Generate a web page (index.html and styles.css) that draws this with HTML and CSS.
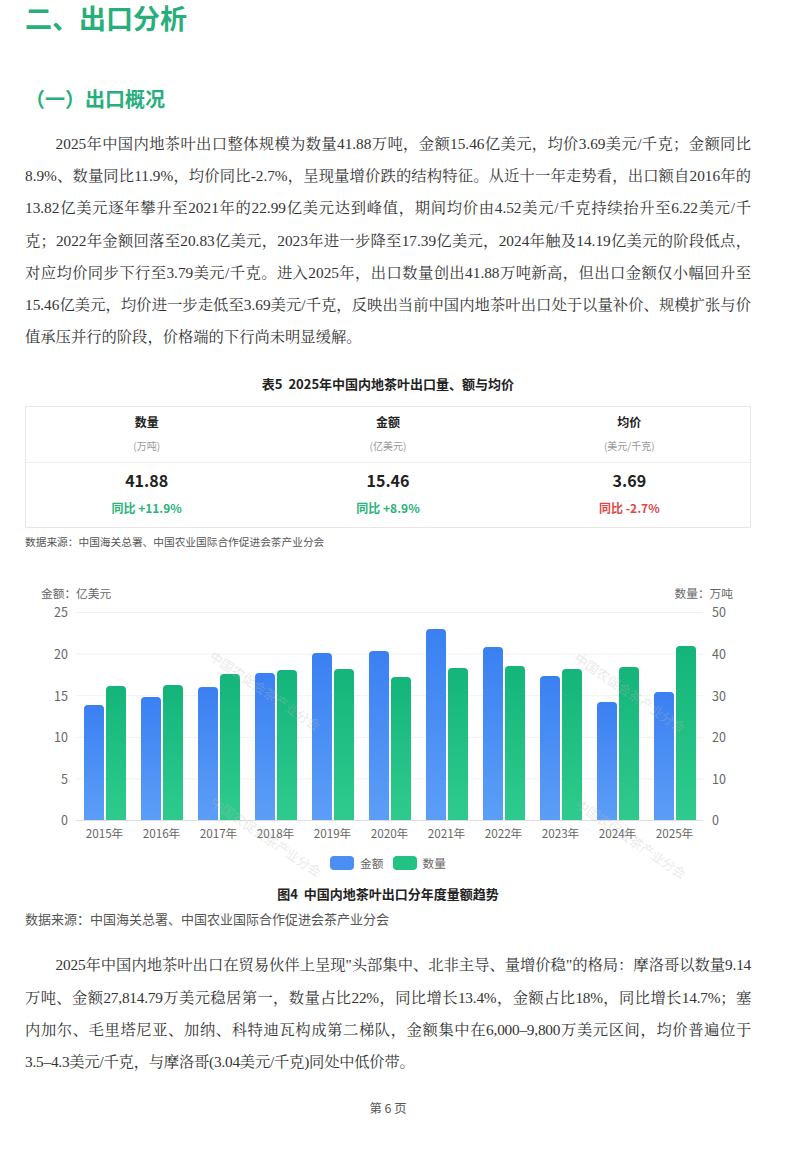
FILE: index.html
```html
<!DOCTYPE html>
<html lang="zh-CN">
<head>
<meta charset="utf-8">
<title>二、出口分析</title>
<link rel="stylesheet" href="styles.css">
</head>
<body>
<div class="page">
  <h1 class="h1">二、出口分析</h1>
  <h2 class="h2">（一）出口概况</h2>
  <p class="para">2025年中国内地茶叶出口整体规模为数量41.88万吨，金额15.46亿美元，均价3.69美元/千克；金额同比8.9%、数量同比11.9%，均价同比-2.7%，呈现量增价跌的结构特征。从近十一年走势看，出口额自2016年的13.82亿美元逐年攀升至2021年的22.99亿美元达到峰值，期间均价由4.52美元/千克持续抬升至6.22美元/千克；2022年金额回落至20.83亿美元，2023年进一步降至17.39亿美元，2024年触及14.19亿美元的阶段低点，对应均价同步下行至3.79美元/千克。进入2025年，出口数量创出41.88万吨新高，但出口金额仅小幅回升至15.46亿美元，均价进一步走低至3.69美元/千克，反映出当前中国内地茶叶出口处于以量补价、规模扩张与价值承压并行的阶段，价格端的下行尚未明显缓解。</p>

  <div class="caption table-caption">表5&nbsp; 2025年中国内地茶叶出口量、额与均价</div>
  <div class="stats">
    <div class="stat-row head">
      <div class="cell"><div class="cell-title">数量</div><div class="cell-unit">(万吨)</div></div>
      <div class="cell"><div class="cell-title">金额</div><div class="cell-unit">(亿美元)</div></div>
      <div class="cell"><div class="cell-title">均价</div><div class="cell-unit">(美元/千克)</div></div>
    </div>
    <div class="stat-row body">
      <div class="cell"><div class="cell-value">41.88</div><div class="cell-yoy up">同比 +11.9%</div></div>
      <div class="cell"><div class="cell-value">15.46</div><div class="cell-yoy up">同比 +8.9%</div></div>
      <div class="cell"><div class="cell-value">3.69</div><div class="cell-yoy down">同比 -2.7%</div></div>
    </div>
  </div>
  <div class="source small">数据来源：中国海关总署、中国农业国际合作促进会茶产业分会</div>

  <div class="chart">
    <div class="axis-titles"><span>金额：亿美元</span><span>数量：万吨</span></div>
    <div class="chart-body">
      <div class="ticks left"><span>25</span><span>20</span><span>15</span><span>10</span><span>5</span><span>0</span></div>
      <div class="plot">
        <div class="group"><div class="bar blue" style="height:55.28%"></div><div class="bar green" style="height:64.4%"></div></div>
        <div class="group"><div class="bar blue" style="height:59.3%"></div><div class="bar green" style="height:65.2%"></div></div>
        <div class="group"><div class="bar blue" style="height:64.1%"></div><div class="bar green" style="height:70.4%"></div></div>
        <div class="group"><div class="bar blue" style="height:70.9%"></div><div class="bar green" style="height:72.4%"></div></div>
        <div class="group"><div class="bar blue" style="height:80.6%"></div><div class="bar green" style="height:72.6%"></div></div>
        <div class="group"><div class="bar blue" style="height:81.4%"></div><div class="bar green" style="height:69.2%"></div></div>
        <div class="group"><div class="bar blue" style="height:91.96%"></div><div class="bar green" style="height:73.2%"></div></div>
        <div class="group"><div class="bar blue" style="height:83.32%"></div><div class="bar green" style="height:74.4%"></div></div>
        <div class="group"><div class="bar blue" style="height:69.56%"></div><div class="bar green" style="height:72.8%"></div></div>
        <div class="group"><div class="bar blue" style="height:56.76%"></div><div class="bar green" style="height:74%"></div></div>
        <div class="group"><div class="bar blue" style="height:61.84%"></div><div class="bar green" style="height:83.76%"></div></div>
      </div>
      <div class="ticks right"><span>50</span><span>40</span><span>30</span><span>20</span><span>10</span><span>0</span></div>
      <div class="xlabels">
        <span>2015年</span><span>2016年</span><span>2017年</span><span>2018年</span><span>2019年</span><span>2020年</span><span>2021年</span><span>2022年</span><span>2023年</span><span>2024年</span><span>2025年</span>
      </div>
    </div>
    <div class="legend">
      <span class="legend-item"><span class="swatch blue"></span>金额</span>
      <span class="legend-item"><span class="swatch green"></span>数量</span>
    </div>
    <span class="watermark wm1">中国农促会茶产业分会</span>
    <span class="watermark wm2">中国农促会茶产业分会</span>
    <span class="watermark wm3">中国农促会茶产业分会</span>
    <span class="watermark wm4">中国农促会茶产业分会</span>
  </div>
  <div class="caption fig-caption">图4&nbsp; 中国内地茶叶出口分年度量额趋势</div>
  <div class="source large">数据来源：中国海关总署、中国农业国际合作促进会茶产业分会</div>

  <p class="para para2">2025年中国内地茶叶出口在贸易伙伴上呈现"头部集中、北非主导、量增价稳"的格局：摩洛哥以数量9.14万吨、金额27,814.79万美元稳居第一，数量占比22%，同比增长13.4%，金额占比18%，同比增长14.7%；塞<span class="nobr">内加尔</span>、毛里塔尼亚、加纳、科特迪瓦构成第二梯队，金额集中在<span class="nobr">6,000–9,800万美元</span>区间，均价普遍位于<span class="nobr">3.5–4.3美元/千克</span>，与摩洛哥(3.04美元/千克)同处中低价带。</p>

  <div class="footer">第 6 页</div>
</div>
</body>
</html>
```

FILE: styles.css
```css
* { box-sizing: border-box; }
html, body { margin: 0; padding: 0; background: #fff; }
body {
  font-family: "Noto Sans CJK SC", "Noto Sans", sans-serif;
  color: #333;
}
.page {
  width: 751px;
  padding-left: 25px;
}
.h1 {
  margin: 0;
  font-size: 27px;
  line-height: 36px;
  font-weight: 700;
  color: #27ae7a;
}
.h2 {
  margin: 49px 0 0;
  font-size: 20px;
  line-height: 28px;
  font-weight: 700;
  color: #27ae7a;
}
.para {
  margin: 15px 0 0;
  font-family: "Liberation Serif", "Noto Serif CJK SC", "Noto Sans CJK SC", serif;
  font-size: 15.3px;
  line-height: 32.2px;
  text-indent: 2em;
  text-align: justify;
  color: #333;
}
.para2 {
  margin-top: 21px;
  letter-spacing: -0.22px;
}
.nobr { white-space: nowrap; }
.caption {
  text-align: center;
  font-size: 13px;
  line-height: 18px;
  font-weight: 700;
  color: #222;
}
.table-caption { margin-top: 22px; }
.stats {
  margin-top: 13px;
  border: 1px solid #e6e6e6;
}
.stat-row {
  display: grid;
  grid-template-columns: 1fr 1fr 1fr;
}
.stat-row.head { border-bottom: 1px solid #eeeeee; }
.cell { text-align: center; }
.head .cell { padding: 6px 0 9px; }
.body .cell { padding: 6px 0 11px; }
.cell-title {
  font-size: 12px;
  line-height: 18px;
  font-weight: 700;
  color: #222;
}
.cell-unit {
  margin-top: 8px;
  font-size: 10px;
  line-height: 14px;
  color: #999;
}
.cell-value {
  font-size: 16px;
  line-height: 22px;
  font-weight: 700;
  color: #222;
}
.cell-yoy {
  margin-top: 9px;
  font-size: 12px;
  line-height: 16px;
  font-weight: 700;
}
.cell-yoy.up { color: #2ab37b; }
.cell-yoy.down { color: #e04848; }
.source { color: #555; }
.source.small {
  margin-top: 6px;
  font-size: 10.7px;
  line-height: 16px;
}
.source.large {
  margin-top: 7px;
  font-size: 13px;
  line-height: 18px;
}
.chart {
  position: relative;
  margin-top: 35px;
  color: #666;
}
.axis-titles {
  display: flex;
  justify-content: space-between;
  padding: 0 18px 0 16px;
  font-size: 11.7px;
  line-height: 16px;
  color: #666;
}
.chart-body {
  margin-top: 11px;
  display: grid;
  grid-template-columns: 51px 627px 1fr;
  grid-template-rows: 209px auto;
}
.ticks {
  display: flex;
  flex-direction: column;
  justify-content: space-between;
  margin: -8px 0 -7px;
  font-size: 12.5px;
  line-height: 16px;
  color: #666;
}
.ticks.left { text-align: right; padding-right: 8px; }
.ticks.right { text-align: left; padding-left: 9px; }
.plot {
  display: flex;
  align-items: flex-end;
  border-bottom: 1px solid #dedede;
  background-image: linear-gradient(to bottom, #f1f1f1 1px, transparent 1px);
  background-size: 100% 20%;
}
.group {
  flex: 1;
  height: 100%;
  display: flex;
  justify-content: center;
  align-items: flex-end;
  gap: 2px;
}
.bar {
  width: 20px;
  border-radius: 4px 4px 0 0;
}
.bar.blue { background: linear-gradient(to bottom, #3a80f2, #5c9ef6); }
.bar.green { background: linear-gradient(to bottom, #14b47a, #2fcb8e); }
.xlabels {
  grid-column: 2;
  display: flex;
  margin-top: 4px;
  font-size: 11.7px;
  line-height: 16px;
  color: #666;
}
.xlabels span { flex: 1; text-align: center; }
.watermark {
  position: absolute;
  width: 130px;
  font-size: 13px;
  line-height: 14px;
  color: rgba(185, 185, 185, 0.32);
  white-space: nowrap;
  transform: rotate(34deg);
  transform-origin: center;
  pointer-events: none;
}
.wm1 { left: 175px; top: 99px; }
.wm2 { left: 176px; top: 245px; }
.wm3 { left: 540px; top: 101px; }
.wm4 { left: 541px; top: 247px; }
.legend {
  margin-top: 14px;
  display: flex;
  justify-content: center;
  gap: 9px;
  font-size: 11.7px;
  line-height: 16px;
  color: #666;
}
.legend-item {
  display: inline-flex;
  align-items: center;
  gap: 6px;
}
.swatch {
  display: inline-block;
  width: 24px;
  height: 14px;
  border-radius: 4px;
}
.swatch.blue { background: #4b8ef4; }
.swatch.green { background: #22c184; }
.fig-caption { margin-top: 14px; }
.footer {
  margin-top: 21px;
  text-align: center;
  font-size: 12.3px;
  line-height: 18px;
  color: #555;
}
```
